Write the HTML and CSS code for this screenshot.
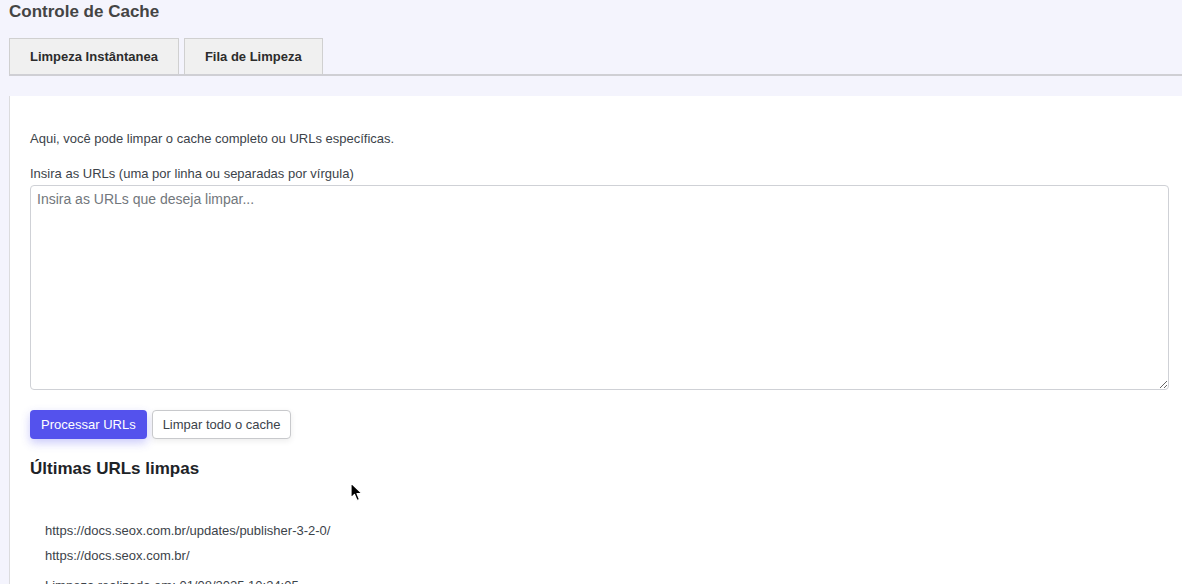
FILE: index.html
```html
<!DOCTYPE html>
<html lang="pt-BR">
<head>
    <meta charset="UTF-8">
    <meta name="viewport" content="width=device-width, initial-scale=1.0">
    <title>Controle de Cache</title>
    <link rel="stylesheet" href="styles.css">
</head>
<body>
    <div class="wrap">
        <h1 class="page-title">Controle de Cache</h1>
        <div class="tabs">
            <button class="tab active">Limpeza Instântanea</button>
            <button class="tab">Fila de Limpeza</button>
        </div>
        <div class="panel">
            <p class="intro">Aqui, você pode limpar o cache completo ou URLs específicas.</p>
            <label class="field-label" for="urls">Insira as URLs (uma por linha ou separadas por vírgula)</label>
            <textarea id="urls" class="urls" placeholder="Insira as URLs que deseja limpar..."></textarea>
            <div class="actions">
                <button class="btn btn-primary">Processar URLs</button>
                <button class="btn btn-secondary">Limpar todo o cache</button>
            </div>
            <h3 class="section-title">Últimas URLs limpas</h3>
            <ul class="url-list">
                <li>https://docs.seox.com.br/updates/publisher-3-2-0/</li>
                <li>https://docs.seox.com.br/</li>
            </ul>
            <p class="last-run">Limpeza realizada em: 01/08/2025 10:34:05</p>
        </div>
    </div>

    <svg class="cursor" width="14" height="20" viewBox="0 0 14 20">
        <path d="M1 1 L1 16 L4.5 12.5 L7 18.5 L9.5 17.5 L7 11.5 L12 11.5 Z" fill="#000" stroke="#fff" stroke-width="1.2" stroke-linejoin="round"/>
    </svg>
</body>
</html>
```

FILE: styles.css
```css
html, body {
    margin: 0;
    padding: 0;
    overflow: hidden;
}
body {
    font-family: "Liberation Sans", Arial, sans-serif;
    font-size: 13px;
    color: #3c434a;
    background-color: #f4f4fd;
    height: 584px;
}
.wrap {
    width: 1180px;
    margin-left: 9px;
}
.page-title {
    margin: 0;
    font-size: 17px;
    line-height: 24px;
    font-weight: bold;
    color: #444;
}
.tabs {
    display: flex;
    gap: 5px;
    margin-top: 14px;
    border-bottom: 2px solid #cfcfd4;
}
.tab {
    height: 36px;
    padding: 0 20px;
    font-family: inherit;
    font-size: 13px;
    font-weight: bold;
    color: #2c2c2c;
    background: #f0f0f0;
    border: 1px solid #d0d0d0;
    border-bottom: none;
    cursor: pointer;
}
.panel {
    margin-top: 20px;
    background: #fff;
    border-left: 1px solid #dcdcde;
    padding: 20px;
    min-height: 600px;
}
.intro {
    margin: 13px 0 16px;
    line-height: 20px;
}
.field-label {
    display: block;
    line-height: 18px;
}
.urls {
    display: block;
    box-sizing: border-box;
    width: 100%;
    height: 205px;
    margin-top: 2px;
    padding: 4px 6px;
    font-family: inherit;
    font-size: 14px;
    line-height: 18px;
    color: #333;
    border: 1px solid #cfd1d6;
    border-radius: 4px;
    resize: vertical;
}
.urls::placeholder {
    color: #72777c;
}
.actions {
    display: flex;
    gap: 5px;
    margin-top: 20px;
}
.btn {
    height: 29px;
    font-family: inherit;
    font-size: 13px;
    border-radius: 4px;
    cursor: pointer;
}
.btn-primary {
    padding: 0 11px;
    color: #fff;
    background: #5452ed;
    border: none;
    box-shadow: 0 4px 10px rgba(84, 82, 237, 0.3);
}
.btn-secondary {
    padding: 0 10px;
    color: #3c434a;
    background: #fff;
    border: 1px solid #c8c9cc;
    box-shadow: 0 2px 6px rgba(0, 0, 0, 0.08);
}
.section-title {
    margin: 18px 0 0;
    font-size: 17px;
    line-height: 24px;
    font-weight: bold;
    color: #1d2327;
}
.url-list {
    list-style: none;
    margin: 40px 0 0;
    padding-left: 15px;
}
.url-list li {
    line-height: 20px;
    margin-bottom: 5px;
}
.last-run {
    margin: 10px 0 0 15px;
    line-height: 20px;
}
.cursor {
    position: absolute;
    left: 350px;
    top: 482px;
}
```
